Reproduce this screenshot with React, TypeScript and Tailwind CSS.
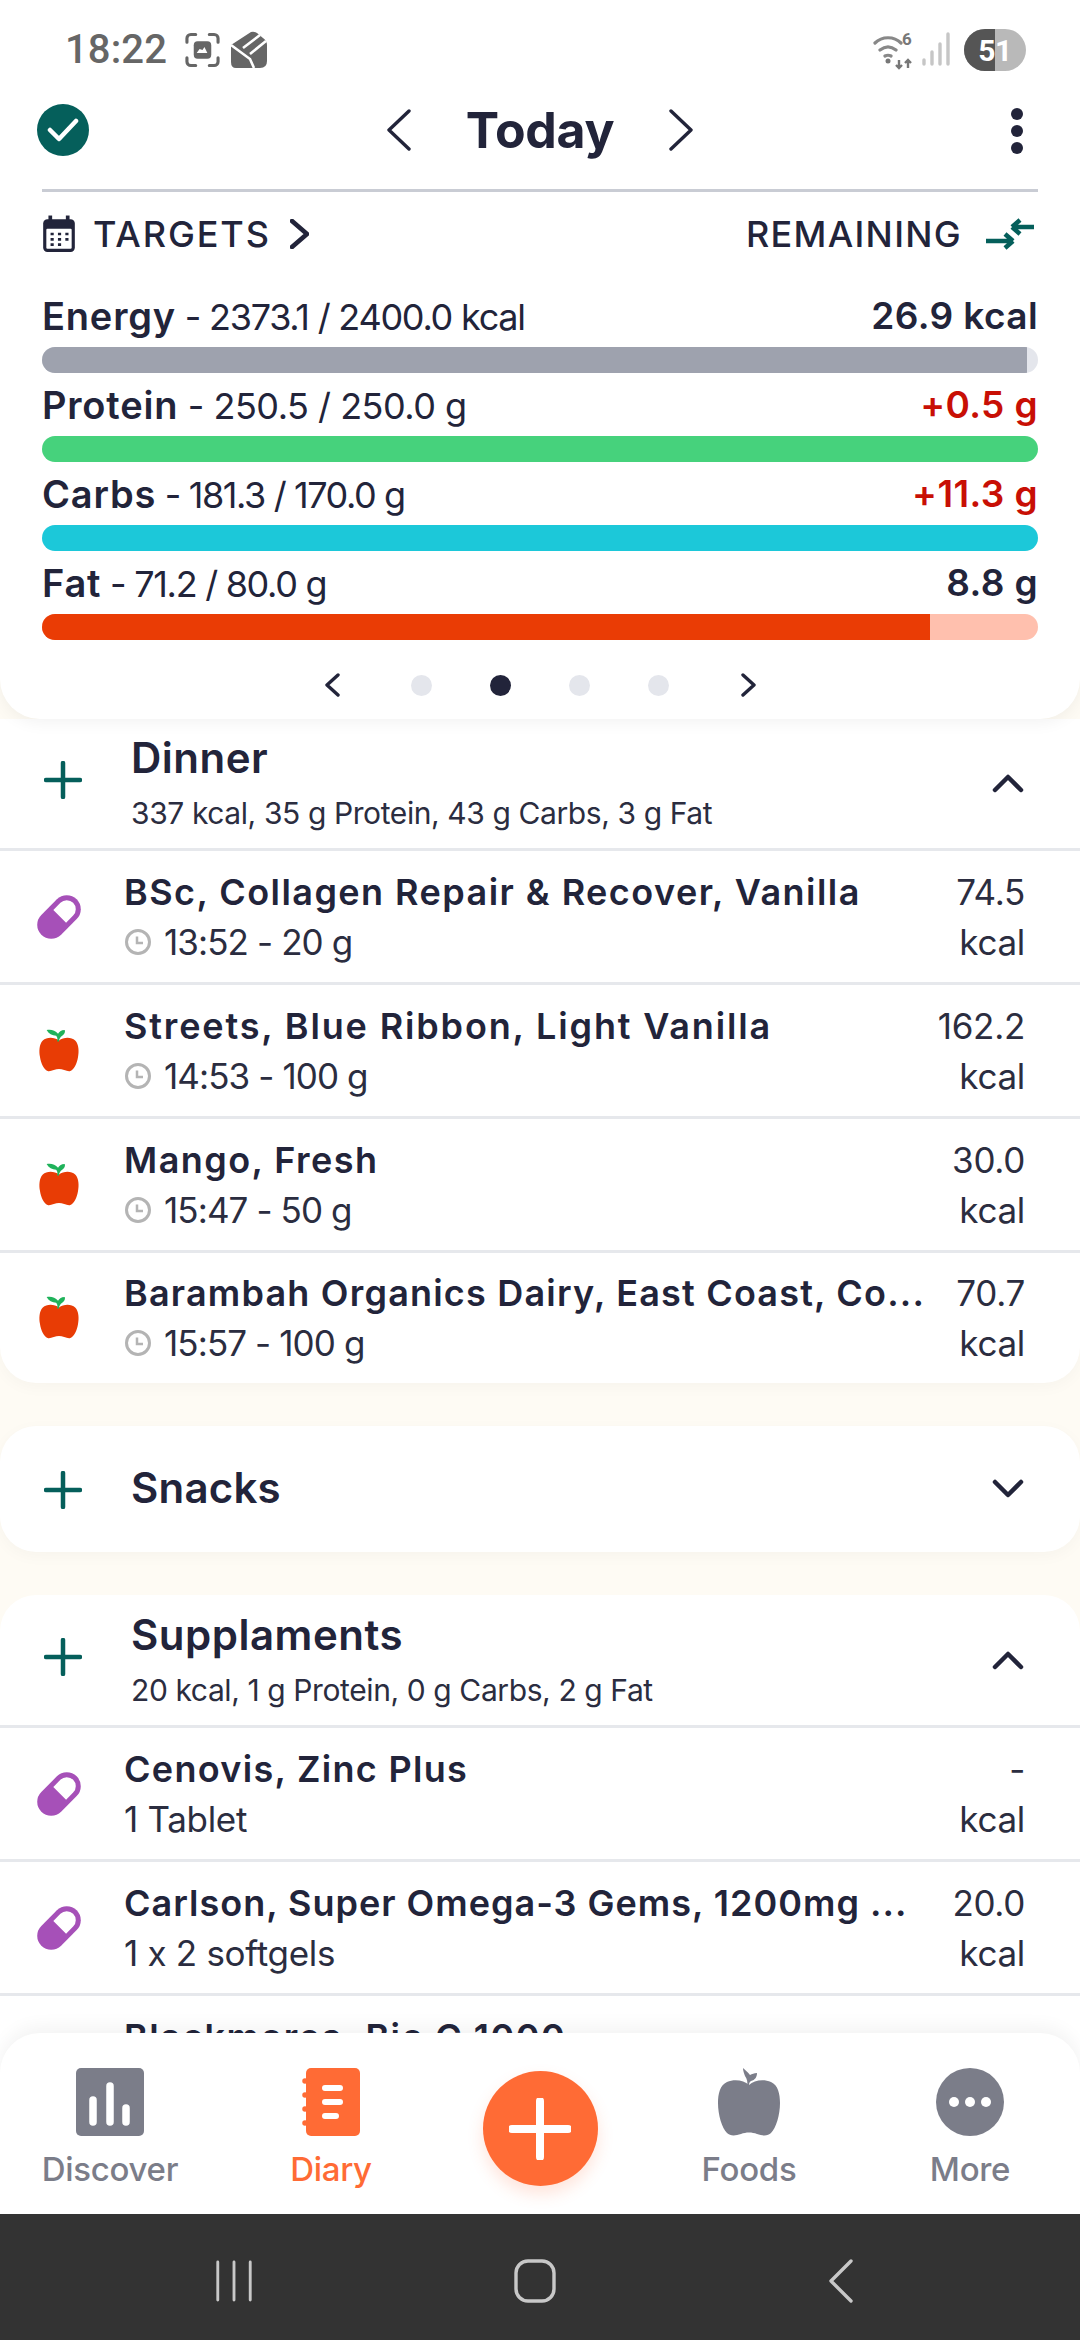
import React from "react";

const Pill = () => (
  <svg width="48" height="48" viewBox="0 0 48 48" className="shrink-0">
    <g transform="rotate(-45 24 24)">
      <rect x="-1" y="10" width="50" height="28" rx="14" fill="#a650b8" />
      <path d="M25 15h10a9 9 0 0 1 0 18H25z" fill="#fff" />
    </g>
  </svg>
);

const Apple = () => (
  <svg width="40" height="46" viewBox="0 0 42 46" className="shrink-0">
    <path d="M21 12C16 8 8 8 4 12 0 16 0 24 1 29c1 7 4 13 8 15 3 1 8-2 12-2s9 3 12 2c4-2 7-8 8-15 1-5 1-13-3-17-4-4-12-4-17 0z" fill="#e83c05" />
    <path d="M19 13c1-3 0-5-1-6-4 0-8-2-10-6 4-1 9 0 12 4 1-2 3-4 7-4 1 3-1 5-4 7-1 1-2 3-2 5z" fill="#1fb25a" />
  </svg>
);

const Clock = () => (
  <svg width="28" height="28" viewBox="0 0 28 28" className="shrink-0">
    <circle cx="14" cy="14" r="11.5" fill="none" stroke="#b4b4b4" strokeWidth="3" />
    <path d="M13 8.5v6.5h6" fill="none" stroke="#b4b4b4" strokeWidth="2.5" />
  </svg>
);

const Plus = ({ className }: { className: string }) => (
  <svg width="38" height="38" viewBox="0 0 38 38" className={`shrink-0 ${className}`}>
    <path d="M19 2v34M2 19h34" stroke="#055f5b" strokeWidth="4.5" strokeLinecap="round" />
  </svg>
);

const Chev = ({ up }: { up?: boolean }) => (
  <svg width="32" height="20" viewBox="0 0 32 20" className="shrink-0">
    <path d={up ? "M3 17 16 4l13 13" : "M3 3l13 13L29 3"} fill="none" stroke="#22243a" strokeWidth="4.5" strokeLinecap="round" strokeLinejoin="round" />
  </svg>
);

const Side = ({ dir, w, h, sw, color = "#22243a" }: { dir: "l" | "r"; w: number; h: number; sw: number; color?: string }) => (
  <svg width={w} height={h} viewBox={`0 0 ${w} ${h}`} className="shrink-0">
    <path
      d={dir === "l" ? `M${w - 2} 2 2 ${h / 2}l${w - 4} ${h / 2 - 2}` : `M2 2l${w - 4} ${h / 2 - 2}L2 ${h - 2}`}
      fill="none"
      stroke={color}
      strokeWidth={sw}
      strokeLinecap="round"
      strokeLinejoin="round"
    />
  </svg>
);

type Item = { icon: "pill" | "apple"; name: string; sub: string; time?: boolean; kcal: string; track: string };

const Row = ({ item, last }: { item: Item; last?: boolean }) => (
  <div className={`flex items-center pl-[35px] pr-[55px] ${last ? "h-[130px]" : "h-[134px] border-b-[3px] border-[#e6e8ec]"}`}>
    <div className="w-[89px] shrink-0 flex items-center">{item.icon === "pill" ? <Pill /> : <div className="ml-[4px] flex"><Apple /></div>}</div>
    <div className="flex-1 min-w-0 pr-[10px]">
      <div className={`truncate text-[36px] leading-[50px] font-semibold text-[#22243a] ${item.track}`}>{item.name}</div>
      <div className={`flex items-center gap-[12px] text-[35px] leading-[50px] text-[#2b2d40] ${item.time ? "tracking-[-0.9px]" : "tracking-[-0.3px]"}`}>
        {item.time && <Clock />}
        <span>{item.sub}</span>
      </div>
    </div>
    <div className="shrink-0 text-right text-[35px] leading-[50px] tracking-[-0.3px] text-[#2b2d40]">
      <div>{item.kcal}</div>
      <div>kcal</div>
    </div>
  </div>
);

const MealHead = ({ title, sub }: { title: string; sub: string }) => (
  <div className="flex items-center h-[133px] pl-[44px] pr-[56px] border-b-[3px] border-[#e6e8ec]">
    <Plus className="mb-[6px]" />
    <div className="flex-1 ml-[49px]">
      <div className="text-[42px] leading-[54px] font-semibold text-[#22243a] tracking-[0.5px]">{title}</div>
      <div className="text-[30px] leading-[44px] mt-[6px] tracking-[-0.4px] text-[#2b2d40]">{sub}</div>
    </div>
    <Chev up />
  </div>
);

const Macro = ({ name, vals, rem, over, color, track, pct, tr }: { name: string; vals: string; rem: string; over?: boolean; color: string; track: string; pct: number; tr: string }) => (
  <div className="h-[89px]">
    <div className="flex justify-between items-center h-[62px] text-[#22243a]">
      <div className={`text-[36px] ${tr}`}>
        <span className="font-semibold text-[38px] tracking-[0.8px]">{name}</span>
        <span> - {vals}</span>
      </div>
      <div className={`text-[37px] font-semibold tracking-[0.4px] ${over ? "text-[#c80f05]" : "text-[#22243a]"}`}>{rem}</div>
    </div>
    <div className="h-[26px] rounded-full overflow-hidden" style={{ backgroundColor: track }}>
      <div className="h-full" style={{ width: `${pct}%`, backgroundColor: color }} />
    </div>
  </div>
);

const dinner: Item[] = [
  { icon: "pill", name: "BSc, Collagen Repair & Recover, Vanilla", sub: "13:52 - 20 g", time: true, kcal: "74.5", track: "tracking-[1.45px]" },
  { icon: "apple", name: "Streets, Blue Ribbon, Light Vanilla", sub: "14:53 - 100 g", time: true, kcal: "162.2", track: "tracking-[1.85px]" },
  { icon: "apple", name: "Mango, Fresh", sub: "15:47 - 50 g", time: true, kcal: "30.0", track: "tracking-[1.45px]" },
  { icon: "apple", name: "Barambah Organics Dairy, East Coast, Co...", sub: "15:57 - 100 g", time: true, kcal: "70.7", track: "tracking-[1.2px]" },
];

const supps: Item[] = [
  { icon: "pill", name: "Cenovis, Zinc Plus", sub: "1 Tablet", kcal: "-", track: "tracking-[1.3px]" },
  { icon: "pill", name: "Carlson, Super Omega-3 Gems, 1200mg ...", sub: "1 x 2 softgels", kcal: "20.0", track: "tracking-[1px]" },
  { icon: "pill", name: "Blackmores, Bio C 1000", sub: "1 Tablet", kcal: "-", track: "tracking-[1.45px]" },
];

const NavItem = ({ label, active, children }: { label: string; active?: boolean; children: React.ReactNode }) => (
  <div className="w-[160px] flex flex-col items-center">
    <div className="h-[68px] flex items-center justify-center">{children}</div>
    <div className={`mt-[11px] text-[33px] leading-[44px] font-medium tracking-[-0.3px] ${active ? "text-[#ff6b35]" : "text-[#7b7d89]"}`}>{label}</div>
  </div>
);

export default function App() {
  return (
    <div className="w-[1080px] h-[2340px] overflow-hidden flex flex-col bg-[#fefbf4] font-['Inter',sans-serif]">
      {/* top card */}
      <div className="relative z-10 shrink-0 h-[719px] bg-white rounded-b-[40px] shadow-[0_4px_16px_rgba(0,0,0,0.05)]">
        <div className="h-[100px] flex items-center justify-between pl-[65px] pr-[54px] font-['Roboto',sans-serif]">
          <div className="flex items-center">
            <span className="text-[40px] font-medium text-[#666] tracking-[0.1px]">18:22</span>
            <svg width="35" height="36" viewBox="0 0 36 36" className="ml-[18px]">
              <path d="M2 10V6a4 4 0 0 1 4-4h5M25 2h5a4 4 0 0 1 4 4v4M34 26v4a4 4 0 0 1-4 4h-5M11 34H6a4 4 0 0 1-4-4v-4" fill="none" stroke="#666" strokeWidth="3.2" strokeLinecap="round" />
              <rect x="9" y="9" width="18" height="18" rx="4" fill="#666" />
              <path d="M12 21l3-4 3 1 2-3 3 6z" fill="#fff" />
            </svg>
            <svg width="38" height="38" viewBox="0 0 38 38" className="ml-[10px]">
              <path d="M1 14 21 1q3-1 6 1l6 5q4 3 4 7v16q0 7-7 7H6q-5 0-5-6z" fill="#666" />
              <path d="M1 14l19 14 4 9M13 17 30 4M20 23 36 10" fill="none" stroke="#fff" strokeWidth="2.6" />
            </svg>
          </div>
          <div className="flex items-center">
            <svg width="50" height="40" viewBox="0 0 50 40">
              <path d="M2 13c7-7 19-7 26 0M7 20c5-4 11-4 16 0M12 26c2-1 4-1 6 0" fill="none" stroke="#888" strokeWidth="3.2" strokeLinecap="round" />
              <circle cx="15" cy="31" r="2.5" fill="#777" />
              <path d="M26 30v8m-3-3 3 3 3-3M35 38v-8m-3 3 3-3 3 3" fill="none" stroke="#777" strokeWidth="2.4" />
              <text x="29" y="15" fontSize="17" fontWeight="700" fill="#777" fontFamily="Roboto, sans-serif">6</text>
            </svg>
            <svg width="30" height="36" viewBox="0 0 30 36" className="ml-[-3px] mr-[14px]">
              <path d="M4 32v-4M12 32V20M20 32V12M28 32V2" stroke="#c6c6c6" strokeWidth="3.4" strokeLinecap="round" />
            </svg>
            <div className="w-[62px] h-[42px] rounded-full overflow-hidden flex relative bg-[#b9b9b9]">
              <div className="w-[31px] h-full bg-[#555]" />
              <span className="absolute inset-0 flex items-center justify-center text-[30px] font-bold text-white tracking-[-0.5px]">51</span>
            </div>
          </div>
        </div>

        <div className="relative h-[60px] flex items-center justify-center">
          <div className="absolute left-[37px] top-[4px] w-[52px] h-[52px] rounded-full bg-[#055f5b] flex items-center justify-center">
            <svg width="32" height="26" viewBox="0 0 32 26">
              <path d="M3 13l9 9L29 4" fill="none" stroke="#fff" strokeWidth="4.5" strokeLinecap="round" strokeLinejoin="round" />
            </svg>
          </div>
          <div className="flex items-center gap-[55px]">
            <Side dir="l" w={24} h={42} sw={3.4} />
            <span className="text-[50px] font-bold leading-[60px] text-[#22243a] tracking-[-0.3px]">Today</span>
            <Side dir="r" w={24} h={42} sw={3.4} />
          </div>
          <div className="absolute left-[1011px] top-[8px] flex flex-col gap-[5px]">
            {[0, 1, 2].map((i) => <div key={i} className="w-[12px] h-[12px] rounded-full bg-[#22243a]" />)}
          </div>
        </div>

        <div className="mx-[42px] mt-[29px] h-[3px] bg-[#c9ccd4]" />

        <div className="mx-[42px] mt-[20px] h-[44px] flex items-center justify-between text-[36px] font-medium text-[#22243a]">
          <div className="flex items-center gap-[19px]">
            <svg width="34" height="38" viewBox="0 0 32 36" className="-mr-[2px]">
              <rect x="1" y="4" width="30" height="31" rx="4" fill="#22243a" />
              <rect x="6" y="0.5" width="3.5" height="6" fill="#22243a" />
              <rect x="22.5" y="0.5" width="3.5" height="6" fill="#22243a" />
              <rect x="4" y="13" width="24" height="19" rx="1" fill="#fff" />
              <path d="M8 18h3M15 18h3M22 18h3M8 23h3M15 23h3M22 23h3M8 28h3M15 28h3" stroke="#22243a" strokeWidth="2.6" />
            </svg>
            <span className="tracking-[1.9px]">TARGETS</span>
            <Side dir="r" w={19} h={30} sw={4.6} />
          </div>
          <div className="flex items-center gap-[23px] mr-[3px]">
            <span className="tracking-[1.3px]">REMAINING</span>
            <svg width="50" height="32" viewBox="0 0 50 32">
              <path d="M27 9h22M27 9l8-7M27 9l8 7" fill="none" stroke="#055f5b" strokeWidth="4.5" />
              <path d="M1 23h27M28 23l-8-7M28 23l-8 7" fill="none" stroke="#055f5b" strokeWidth="4.5" />
            </svg>
          </div>
        </div>

        <div className="mx-[42px] mt-[29px]">
          <Macro name="Energy" vals="2373.1 / 2400.0 kcal" rem="26.9 kcal" color="#9ea2ae" track="#e4e6ec" pct={98.9} tr="tracking-[-1.25px]" />
          <Macro name="Protein" vals="250.5 / 250.0 g" rem="+0.5 g" over color="#46d27c" track="#46d27c" pct={100} tr="tracking-[-0.5px]" />
          <Macro name="Carbs" vals="181.3 / 170.0 g" rem="+11.3 g" over color="#1cc8d9" track="#1cc8d9" pct={100} tr="tracking-[-1.4px]" />
          <Macro name="Fat" vals="71.2 / 80.0 g" rem="8.8 g" color="#ea3c05" track="#ffc0ae" pct={89.2} tr="tracking-[-1.3px]" />
        </div>

        <div className="mt-[29px] flex items-center justify-center h-[30px]">
          <div className="flex items-center">
            <Side dir="l" w={15} h={24} sw={3.4} />
            <div className="w-[71px]" />
            <div className="flex items-center gap-[58px]">
              <div className="w-[21px] h-[21px] rounded-full bg-[#e4e6ec]" />
              <div className="w-[21px] h-[21px] rounded-full bg-[#22243a]" />
              <div className="w-[21px] h-[21px] rounded-full bg-[#e4e6ec]" />
              <div className="w-[21px] h-[21px] rounded-full bg-[#e4e6ec]" />
            </div>
            <div className="w-[72px]" />
            <Side dir="r" w={15} h={24} sw={3.4} />
          </div>
        </div>
      </div>

      {/* scrolling meals */}
      <div className="flex-1 min-h-0 overflow-hidden">
        <div className="-mt-[1px] bg-white rounded-b-[36px] shadow-[0_4px_16px_rgba(0,0,0,0.03)]">
          <MealHead title="Dinner" sub="337 kcal, 35 g Protein, 43 g Carbs, 3 g Fat" />
          {dinner.map((it, i) => <Row key={it.name} item={it} last={i === dinner.length - 1} />)}
        </div>

        <div className="mt-[43px] h-[126px] bg-white rounded-[36px] shadow-[0_4px_16px_rgba(0,0,0,0.03)] flex items-center pl-[44px] pr-[56px]">
          <Plus className="mt-[2px]" />
          <div className="flex-1 ml-[49px] mb-[3px] text-[42px] font-semibold text-[#22243a] tracking-[0.2px]">Snacks</div>
          <Chev />
        </div>

        <div className="mt-[43px] bg-white rounded-t-[36px]">
          <MealHead title="Supplaments" sub="20 kcal, 1 g Protein, 0 g Carbs, 2 g Fat" />
          {supps.map((it) => <Row key={it.name} item={it} />)}
        </div>
      </div>

      {/* bottom nav */}
      <div className="relative z-10 -mt-[40px] shrink-0 h-[181px] bg-white rounded-t-[40px] shadow-[0_-6px_18px_rgba(0,0,0,0.05)] flex items-start justify-between px-[30px] pt-[35px]">
        <NavItem label="Discover">
          <svg width="68" height="68" viewBox="0 0 68 68">
            <rect width="68" height="68" rx="5" fill="#7b7d89" />
            <path d="M17 32v22M34 18v36M50 40v14" stroke="#fff" strokeWidth="7.5" strokeLinecap="round" />
          </svg>
        </NavItem>
        <NavItem label="Diary" active>
          <svg width="58" height="68" viewBox="0 0 58 68">
            <rect x="4" y="0" width="54" height="68" rx="5" fill="#ff6b35" />
            <path d="M3 13v0M3 27v0M3 41v0M3 55v0" stroke="#ff6b35" strokeWidth="5.5" strokeLinecap="round" />
            <path d="M23 20h15M23 34h15M23 48h11" stroke="#fff" strokeWidth="6" strokeLinecap="round" />
          </svg>
        </NavItem>
        <div className="w-[136px] flex justify-center">
          <div className="w-[115px] h-[115px] mt-[3px] rounded-full bg-[#ff6b35] shadow-[0_8px_16px_rgba(255,107,53,0.18)] flex items-center justify-center">
            <svg width="62" height="62" viewBox="0 0 62 62">
              <path d="M31 3v56M3 31h56" stroke="#fff" strokeWidth="8" strokeLinecap="round" />
            </svg>
          </div>
        </div>
        <NavItem label="Foods">
          <svg width="64" height="68" viewBox="0 0 64 68">
            <path d="M32 17C27 12 17 11 10 14 3 17 1 26 1 35c0 12 4 25 9 30 3 3 8 3 14 1 5-2 11-2 16 0 6 2 11 2 14-1 5-5 9-18 9-30 0-9-2-18-9-21-7-3-17-2-22 3z" fill="#7b7d89" />
            <path d="M30 18c1-4 0-7-2-10-1-3-2-5-2-8 2 2 5 4 7 7 2-1 4-2 7-2 0 4-2 7-6 8-2 1-2 3-2 5z" fill="#7b7d89" />
          </svg>
        </NavItem>
        <NavItem label="More">
          <svg width="68" height="68" viewBox="0 0 68 68">
            <circle cx="34" cy="34" r="34" fill="#7b7d89" />
            <circle cx="18" cy="34" r="5" fill="#fff" />
            <circle cx="34" cy="34" r="5" fill="#fff" />
            <circle cx="50" cy="34" r="5" fill="#fff" />
          </svg>
        </NavItem>
      </div>

      {/* android bar */}
      <div className="relative z-10 shrink-0 h-[126px] bg-[#333333] flex items-center justify-between pl-[214px] pr-[226px] pt-[8px]">
        <svg width="40" height="42" viewBox="0 0 40 44">
          <path d="M3 2v40M20 2v40M37 2v40" stroke="#c8c8c8" strokeWidth="3" strokeLinecap="round" />
        </svg>
        <svg width="42" height="44" viewBox="0 0 42 44" className="mr-[12px]">
          <rect x="2" y="2" width="38" height="40" rx="12" fill="none" stroke="#c8c8c8" strokeWidth="3.4" />
        </svg>
        <svg width="26" height="44" viewBox="0 0 26 44">
          <path d="M23 2 3 22l20 20" fill="none" stroke="#c8c8c8" strokeWidth="3.4" strokeLinecap="round" strokeLinejoin="round" />
        </svg>
      </div>
    </div>
  );
}
